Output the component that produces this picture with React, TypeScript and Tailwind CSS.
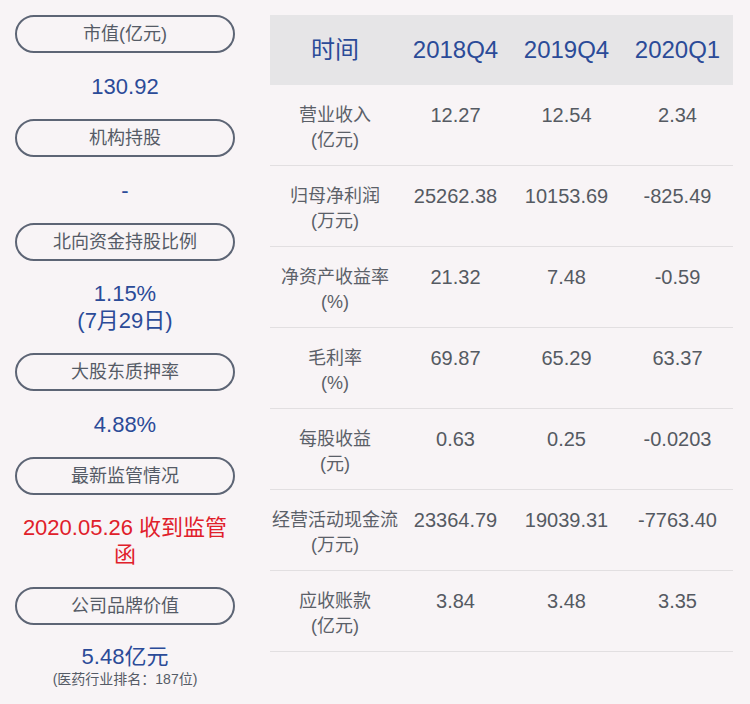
const F = { fontFamily: '"Liberation Sans","Noto Sans CJK SC",sans-serif' };
const Pill = ({ t }: { t: string }) => (
  <div className="h-[38px] rounded-full border-2 border-[#5d6575] flex items-center justify-center text-[18px] text-[#555b66]">{t}</div>
);
const rows = [
  ["营业收入", "(亿元)", "12.27", "12.54", "2.34"],
  ["归母净利润", "(万元)", "25262.38", "10153.69", "-825.49"],
  ["净资产收益率", "(%)", "21.32", "7.48", "-0.59"],
  ["毛利率", "(%)", "69.87", "65.29", "63.37"],
  ["每股收益", "(元)", "0.63", "0.25", "-0.0203"],
  ["经营活动现金流", "(万元)", "23364.79", "19039.31", "-7763.40"],
  ["应收账款", "(亿元)", "3.84", "3.48", "3.35"],
];
export default function App() {
  return (
    <div style={F} className="w-[750px] h-[704px] bg-[#f8f4f6] flex pt-[15px]">
      <div className="w-[220px] ml-[15px] flex flex-col text-[#2b4b98] text-[22px] text-center">
        <Pill t="市值(亿元)" />
        <div className="h-[66px] flex items-center justify-center">130.92</div>
        <Pill t="机构持股" />
        <div className="h-[66px] flex items-center justify-center">-</div>
        <Pill t="北向资金持股比例" />
        <div className="h-[92px] flex flex-col items-center justify-center leading-[27px]"><div>1.15%</div><div>(7月29日)</div></div>
        <Pill t="大股东质押率" />
        <div className="h-[66px] flex items-center justify-center">4.88%</div>
        <Pill t="最新监管情况" />
        <div className="h-[92px] flex items-center justify-center leading-[27px] text-[#e0202a]">2020.05.26 收到监管函</div>
        <Pill t="公司品牌价值" />
        <div className="flex flex-col items-center pt-[18px]"><div className="leading-[27px]">5.48亿元</div><div className="text-[14px] text-[#555b66] leading-[18px]">(医药行业排名：187位)</div></div>
      </div>
      <div className="ml-[35px] w-[463px]">
        <div className="h-[70px] bg-[#e6e5e7] flex items-center text-[24px] text-[#2b4b98]">
          <div className="w-[130px] text-center">时间</div>
          {["2018Q4", "2019Q4", "2020Q1"].map(s => <div key={s} className="w-[111px] text-center">{s}</div>)}
        </div>
        {rows.map(r => (
          <div key={r[0]} className="h-[81px] border-b border-[#e2dfe1] flex pt-[18px]">
            <div className="w-[130px] text-center text-[18px] text-[#5b6068] leading-[25px]"><div>{r[0]}</div><div>{r[1]}</div></div>
            {r.slice(2).map((v, i) => <div key={i} className="w-[111px] text-center text-[20px] text-[#555a62] leading-[25px]">{v}</div>)}
          </div>
        ))}
      </div>
    </div>
  );
}
